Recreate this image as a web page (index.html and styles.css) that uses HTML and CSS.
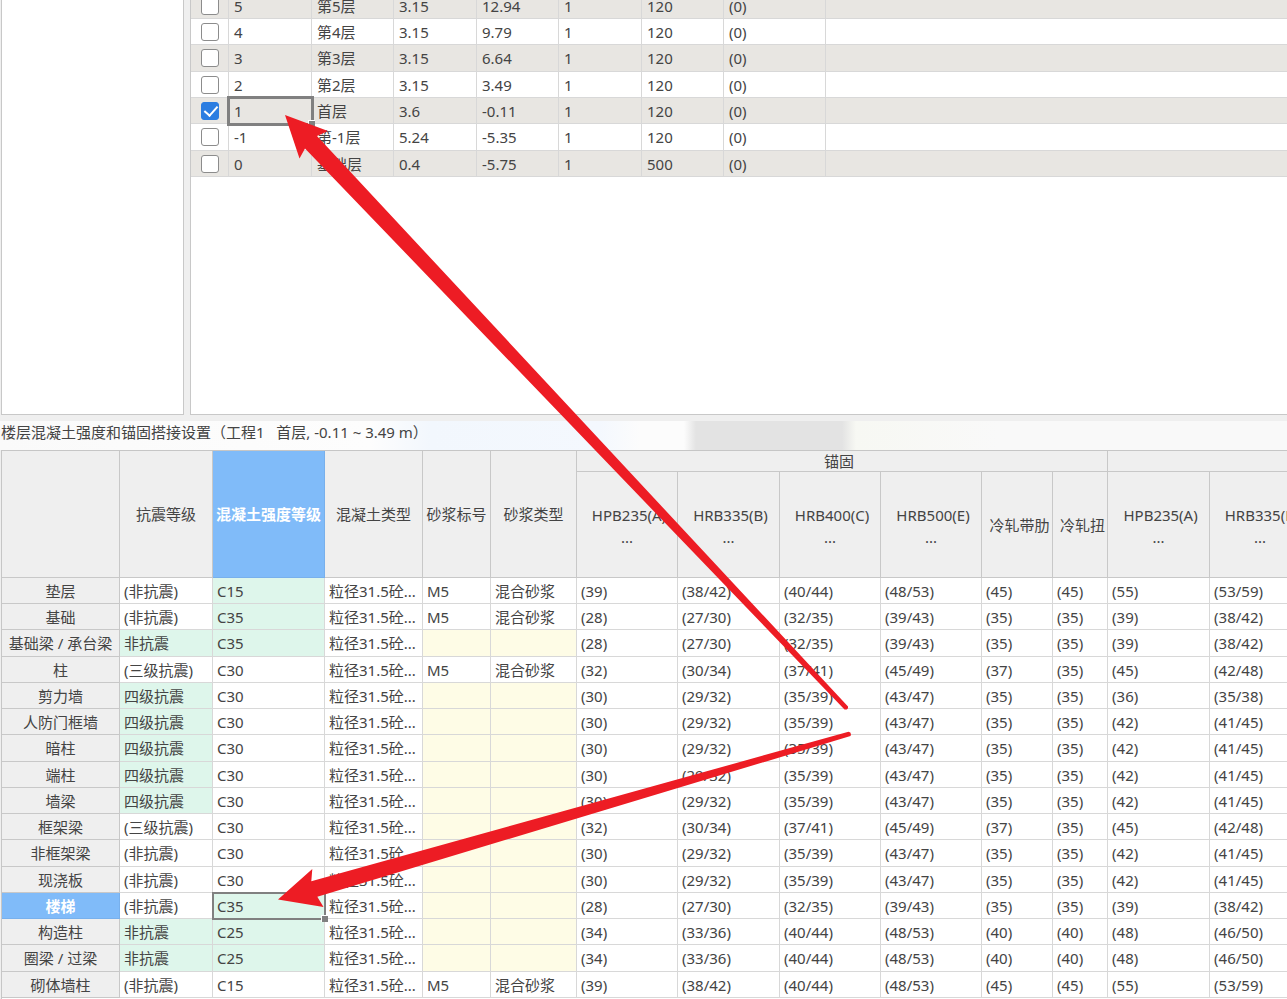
FILE: index.html
```html
<!DOCTYPE html>
<html lang="zh-CN">
<head>
<meta charset="utf-8">
<title>楼层设置</title>
<link rel="stylesheet" href="styles.css">
</head>
<body>
<main class="page">
  <section class="top">
    <div class="panel side"></div>
    <div class="panel floors">
      <table class="grid floor-table">
        <colgroup><col class="w38"><col class="w83"><col class="w82"><col class="w83"><col class="w82"><col class="w83"><col class="w82"><col class="w102"><col></colgroup>
        <tbody>
          <tr><td class="pick"><input type="checkbox" aria-label="第5层"></td><td>5</td><td>第5层</td><td>3.15</td><td>12.94</td><td>1</td><td>120</td><td>(0)</td><td></td></tr>
          <tr><td class="pick"><input type="checkbox" aria-label="第4层"></td><td>4</td><td>第4层</td><td>3.15</td><td>9.79</td><td>1</td><td>120</td><td>(0)</td><td></td></tr>
          <tr><td class="pick"><input type="checkbox" aria-label="第3层"></td><td>3</td><td>第3层</td><td>3.15</td><td>6.64</td><td>1</td><td>120</td><td>(0)</td><td></td></tr>
          <tr><td class="pick"><input type="checkbox" aria-label="第2层"></td><td>2</td><td>第2层</td><td>3.15</td><td>3.49</td><td>1</td><td>120</td><td>(0)</td><td></td></tr>
          <tr><td class="pick"><input type="checkbox" aria-label="首层" checked></td><td class="current thick">1</td><td>首层</td><td>3.6</td><td>-0.11</td><td>1</td><td>120</td><td>(0)</td><td></td></tr>
          <tr><td class="pick"><input type="checkbox" aria-label="第-1层"></td><td>-1</td><td>第-1层</td><td>5.24</td><td>-5.35</td><td>1</td><td>120</td><td>(0)</td><td></td></tr>
          <tr><td class="pick"><input type="checkbox" aria-label="基础层"></td><td>0</td><td>基础层</td><td>0.4</td><td>-5.75</td><td>1</td><td>500</td><td>(0)</td><td></td></tr>
        </tbody>
      </table>
    </div>
  </section>
  <h2 class="caption">楼层混凝土强度和锚固搭接设置（工程1   首层, -0.11 ~ 3.49 m）</h2>
  <section class="strength">
    <table class="grid strength-table">
      <colgroup><col class="w118"><col class="w93"><col class="w112"><col class="w98"><col class="w68"><col class="w86"><col class="w101"><col class="w102"><col class="w101"><col class="w101"><col class="w71"><col class="w55"><col class="w102"><col class="w101"></colgroup>
      <thead>
        <tr class="groups"><th rowspan="2"></th><th rowspan="2">抗震等级</th><th rowspan="2" class="active">混凝土强度等级</th><th rowspan="2">混凝土类型</th><th rowspan="2">砂浆标号</th><th rowspan="2">砂浆类型</th><th colspan="6">锚固</th><th colspan="2"></th></tr>
        <tr class="names"><th><span class="steel">HPB235(A)</span>...</th><th><span class="steel">HRB335(B)</span>...</th><th><span class="steel">HRB400(C)</span>...</th><th><span class="steel">HRB500(E)</span>...</th><th><span class="rolled">冷轧带肋</span></th><th><span class="rolled">冷轧扭</span></th><th><span class="steel">HPB235(A)</span>...</th><th><span class="steel">HRB335(B)</span>...</th></tr>
      </thead>
      <tbody>
        <tr><th>垫层</th><td>(非抗震)</td><td class="green">C15</td><td>粒径31.5砼...</td><td>M5</td><td>混合砂浆</td><td>(39)</td><td>(38/42)</td><td>(40/44)</td><td>(48/53)</td><td>(45)</td><td>(45)</td><td>(55)</td><td>(53/59)</td></tr>
        <tr><th>基础</th><td>(非抗震)</td><td class="green">C35</td><td>粒径31.5砼...</td><td>M5</td><td>混合砂浆</td><td>(28)</td><td>(27/30)</td><td>(32/35)</td><td>(39/43)</td><td>(35)</td><td>(35)</td><td>(39)</td><td>(38/42)</td></tr>
        <tr><th>基础梁 / 承台梁</th><td class="green">非抗震</td><td class="green">C35</td><td>粒径31.5砼...</td><td class="off"></td><td class="off"></td><td>(28)</td><td>(27/30)</td><td>(32/35)</td><td>(39/43)</td><td>(35)</td><td>(35)</td><td>(39)</td><td>(38/42)</td></tr>
        <tr><th>柱</th><td>(三级抗震)</td><td>C30</td><td>粒径31.5砼...</td><td>M5</td><td>混合砂浆</td><td>(32)</td><td>(30/34)</td><td>(37/41)</td><td>(45/49)</td><td>(37)</td><td>(35)</td><td>(45)</td><td>(42/48)</td></tr>
        <tr><th>剪力墙</th><td class="green">四级抗震</td><td>C30</td><td>粒径31.5砼...</td><td class="off"></td><td class="off"></td><td>(30)</td><td>(29/32)</td><td>(35/39)</td><td>(43/47)</td><td>(35)</td><td>(35)</td><td>(36)</td><td>(35/38)</td></tr>
        <tr><th>人防门框墙</th><td class="green">四级抗震</td><td>C30</td><td>粒径31.5砼...</td><td class="off"></td><td class="off"></td><td>(30)</td><td>(29/32)</td><td>(35/39)</td><td>(43/47)</td><td>(35)</td><td>(35)</td><td>(42)</td><td>(41/45)</td></tr>
        <tr><th>暗柱</th><td class="green">四级抗震</td><td>C30</td><td>粒径31.5砼...</td><td class="off"></td><td class="off"></td><td>(30)</td><td>(29/32)</td><td>(35/39)</td><td>(43/47)</td><td>(35)</td><td>(35)</td><td>(42)</td><td>(41/45)</td></tr>
        <tr><th>端柱</th><td class="green">四级抗震</td><td>C30</td><td>粒径31.5砼...</td><td class="off"></td><td class="off"></td><td>(30)</td><td>(29/32)</td><td>(35/39)</td><td>(43/47)</td><td>(35)</td><td>(35)</td><td>(42)</td><td>(41/45)</td></tr>
        <tr><th>墙梁</th><td class="green">四级抗震</td><td>C30</td><td>粒径31.5砼...</td><td class="off"></td><td class="off"></td><td>(30)</td><td>(29/32)</td><td>(35/39)</td><td>(43/47)</td><td>(35)</td><td>(35)</td><td>(42)</td><td>(41/45)</td></tr>
        <tr><th>框架梁</th><td>(三级抗震)</td><td>C30</td><td>粒径31.5砼...</td><td class="off"></td><td class="off"></td><td>(32)</td><td>(30/34)</td><td>(37/41)</td><td>(45/49)</td><td>(37)</td><td>(35)</td><td>(45)</td><td>(42/48)</td></tr>
        <tr><th>非框架梁</th><td>(非抗震)</td><td>C30</td><td>粒径31.5砼...</td><td class="off"></td><td class="off"></td><td>(30)</td><td>(29/32)</td><td>(35/39)</td><td>(43/47)</td><td>(35)</td><td>(35)</td><td>(42)</td><td>(41/45)</td></tr>
        <tr><th>现浇板</th><td>(非抗震)</td><td>C30</td><td>粒径31.5砼...</td><td class="off"></td><td class="off"></td><td>(30)</td><td>(29/32)</td><td>(35/39)</td><td>(43/47)</td><td>(35)</td><td>(35)</td><td>(42)</td><td>(41/45)</td></tr>
        <tr><th class="active">楼梯</th><td>(非抗震)</td><td class="green current">C35</td><td>粒径31.5砼...</td><td class="off"></td><td class="off"></td><td>(28)</td><td>(27/30)</td><td>(32/35)</td><td>(39/43)</td><td>(35)</td><td>(35)</td><td>(39)</td><td>(38/42)</td></tr>
        <tr><th>构造柱</th><td class="green">非抗震</td><td class="green">C25</td><td>粒径31.5砼...</td><td class="off"></td><td class="off"></td><td>(34)</td><td>(33/36)</td><td>(40/44)</td><td>(48/53)</td><td>(40)</td><td>(40)</td><td>(48)</td><td>(46/50)</td></tr>
        <tr><th>圈梁 / 过梁</th><td class="green">非抗震</td><td class="green">C25</td><td>粒径31.5砼...</td><td class="off"></td><td class="off"></td><td>(34)</td><td>(33/36)</td><td>(40/44)</td><td>(48/53)</td><td>(40)</td><td>(40)</td><td>(48)</td><td>(46/50)</td></tr>
        <tr><th>砌体墙柱</th><td>(非抗震)</td><td>C15</td><td>粒径31.5砼...</td><td>M5</td><td>混合砂浆</td><td>(39)</td><td>(38/42)</td><td>(40/44)</td><td>(48/53)</td><td>(45)</td><td>(45)</td><td>(55)</td><td>(53/59)</td></tr>
      </tbody>
    </table>
  </section>
  <svg class="arrows" width="1287" height="999" viewBox="0 0 1287 999" aria-hidden="true">
    <path d="M285 115 328 131 317 136 848 706.5Q848.5 710 844.500 709.500L305 148.500 299.500 158.500Z"/>
    <path d="M278 899.500 312.300 869 311.300 881.300 848.500 731.800Q852 732.500 850.500 736L317.300 896.700 323.500 907Z"/>
  </svg>
</main>
</body>
</html>
```
FILE: styles.css
```css
* { box-sizing: border-box; }
body {
  margin: 0;
  background: #efefef;
  color: #444;
  font-family: "Noto Sans", "Noto Sans CJK SC", sans-serif;
  font-size: 15px;
  line-height: 20px;
}
.page {
  position: relative;
  display: flex;
  flex-direction: column;
  height: 100vh;
  overflow: hidden;
}
.top {
  display: flex;
  flex: none;
  gap: 6px;
  height: 415px;
  padding-left: 1px;
}
.panel {
  background: #fff;
  border: 1px solid #c8c8c8;
  border-top: 0;
}
.side { flex: 0 0 183px; }
.floors { flex: 1; border-right: 0; overflow: hidden; }

.grid {
  table-layout: fixed;
  border-collapse: separate;
  border-spacing: 0;
}
.grid td, .grid th {
  height: 26px;
  padding: 0 0 0 4px;
  border: 0 solid #d8d8d8;
  border-width: 0 1px 1px 0;
  white-space: nowrap;
  text-align: left;
  font-weight: 400;
}
.floor-table { width: 100%; margin-top: -7px; }
.floor-table tr:nth-child(odd) { background: #e8e6e2; }
.floor-table tr:nth-child(3n) td { height: 27px; }
.floor-table td { padding-left: 5px; }
.floor-table td:last-child { border-right: 0; }
.floor-table .pick { padding: 0; text-align: center; }
.pick input {
  appearance: none;
  display: block;
  width: 18px;
  height: 18px;
  margin: 0 auto;
  border: 1px solid #8c8c8c;
  border-radius: 3px;
  background: #fff;
}
.pick input:checked {
  border-color: #2b7de1;
  background: #2b7de1;
}
.pick input:checked::after {
  content: "";
  display: block;
  width: 6px;
  height: 11px;
  margin: 0 0 0 5px;
  border: solid #fff;
  border-width: 0 2px 2px 0;
  transform: rotate(42deg);
}
.grid .current {
  position: relative;
  outline: 2px solid #808080;
  outline-offset: -1px;
}
.grid .current.thick { outline-width: 3px; }
.current::after {
  content: "";
  position: absolute;
  right: -4px;
  bottom: -4px;
  width: 6px;
  height: 6px;
  background: #808080;
  border: solid #fff;
  border-width: 1px 0 0 1px;
}

.caption {
  flex: none;
  height: 29px;
  margin: 6px 0 0;
  padding: 1px 0 0 1px;
  font-size: 15px;
  line-height: 20px;
  font-weight: 400;
  white-space: pre;
  background: linear-gradient(90deg, #fafafa 0, #fdfdfd 370px, #f2f7fd 430px, #f4f8fe 600px, #fcfcfc 640px, #fcfcfc 684px, #e3e3e3 696px, #e3e3e3 842px, #f7f8f3 856px, #f9f9f9 1000px);
}
.strength {
  flex: 1;
  margin-left: 1px;
  border: solid #c6c6c6;
  border-width: 1px 0 0 1px;
  background: #fff;
  overflow: hidden;
}
.strength-table { width: 1309px; }
.strength-table th {
  padding: 0;
  border-color: #c8c8c8;
  background: #efefef;
  text-align: center;
}
.strength-table .groups th { height: 21px; }
.strength-table .groups th[colspan] { padding-right: 6px; }
.strength-table .names th { height: 106px; }
.strength-table tbody tr:nth-child(4n+3) > * { height: 27px; }
.strength-table .active {
  background: #80bbf9;
  border-color: #78b0ec;
  color: #fff;
  font-weight: 700;
}
.steel { display: block; padding: 2px 0 2px 4px; }
.rolled { display: block; padding: 1px 0 0 5px; }
.grid .green { background: #def6eb; }
.grid .off { background: #fefce6; }

.w38 { width: 38px; }
.w55 { width: 55px; }
.w68 { width: 68px; }
.w71 { width: 71px; }
.w82 { width: 82px; }
.w83 { width: 83px; }
.w86 { width: 86px; }
.w93 { width: 93px; }
.w98 { width: 98px; }
.w101 { width: 101px; }
.w102 { width: 102px; }
.w112 { width: 112px; }
.w118 { width: 118px; }

.arrows {
  position: absolute;
  top: 0;
  left: 0;
  fill: #ed1c24;
  pointer-events: none;
}
```
